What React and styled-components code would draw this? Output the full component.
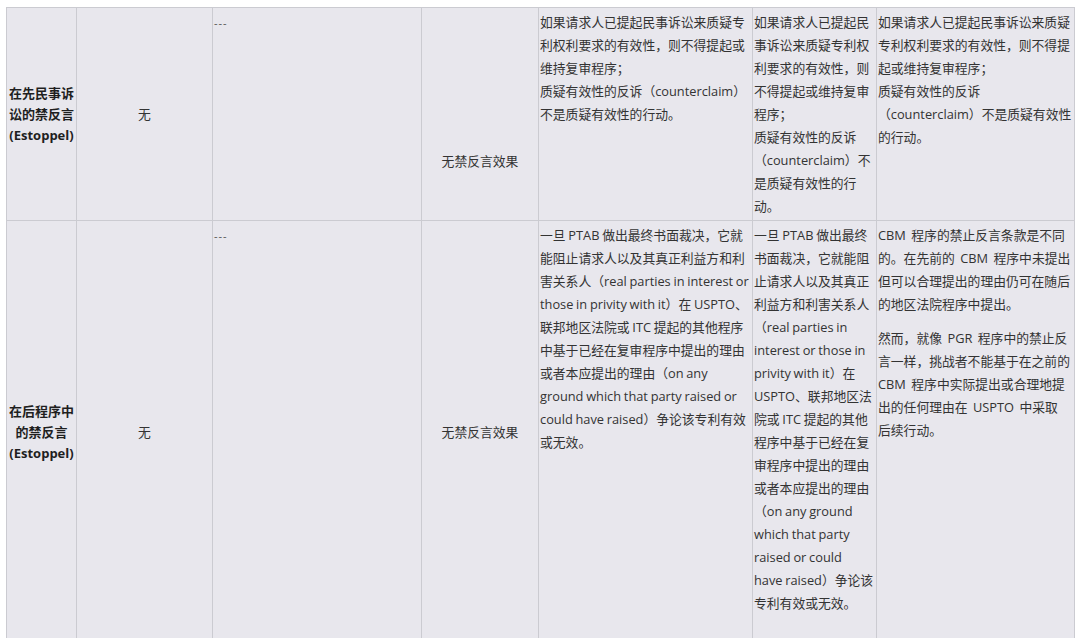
import styled, { createGlobalStyle } from "styled-components";

const GlobalStyle = createGlobalStyle`
  body {
    margin: 0;
    background: #ffffff;
    font-family: "Open Sans", "Noto Sans CJK SC", sans-serif;
  }
`;

const Table = styled.table`
  margin: 7px 0 0 6px;
  border-collapse: collapse;
  table-layout: fixed;
  width: 1068px;
  background: #e8e7ed;
  color: #333333;
  font-size: 12.8px;
`;

const Col = styled.col`
  width: ${(p) => p.$w}px;
`;

const Row = styled.tr`
  height: ${(p) => p.$height}px;
`;

const Cell = styled.td`
  border: 1px solid #cbcbd1;
  padding: 3px 0 0 1px;
  vertical-align: top;
  line-height: 23px;
  white-space: nowrap;
  overflow: hidden;
  word-spacing: -0.6px;
`;

const HeadCell = styled(Cell)`
  vertical-align: middle;
  text-align: center;
  padding: 0;
  font-size: 13px;
  font-weight: 700;
  line-height: 21px;
  color: #1f1f1f;
  word-spacing: 0;
`;

const MidCell = styled(Cell)`
  vertical-align: middle;
  text-align: center;
  padding: ${(p) => p.$offset || 0}px 0 0 0;
`;

const Dash = styled.span`
  font-size: 11px;
  color: #555555;
  letter-spacing: 1px;
`;

const Para = styled.div`
  & + & {
    margin-top: 11px;
  }
`;

const Line = styled.div`
  white-space: pre;
`;

const Lines = ({ lines }) => lines.map((l, i) => <Line key={i}>{l}</Line>);

const widths = [70, 136, 209, 117, 214, 124, 198];

const rows = [
  {
    height: 213,
    head: ["在先民事诉", "讼的禁反言", "(Estoppel)"],
    effectOffset: 94,
    c5: [
      [
        "如果请求人已提起民事诉讼来质疑专",
        "利权利要求的有效性，则不得提起或",
        "维持复审程序；",
        "质疑有效性的反诉（counterclaim）",
        "不是质疑有效性的行动。",
      ],
    ],
    c6: [
      [
        "如果请求人已提起民",
        "事诉讼来质疑专利权",
        "利要求的有效性，则",
        "不得提起或维持复审",
        "程序；",
        "质疑有效性的反诉",
        "（counterclaim）不",
        "是质疑有效性的行",
        "动。",
      ],
    ],
    c7: [
      [
        "如果请求人已提起民事诉讼来质疑",
        "专利权利要求的有效性，则不得提",
        "起或维持复审程序；",
        "质疑有效性的反诉",
        "（counterclaim）不是质疑有效性",
        "的行动。",
      ],
    ],
  },
  {
    height: 424,
    head: ["在后程序中", "的禁反言", "(Estoppel)"],
    effectOffset: 0,
    c5: [
      [
        "一旦 PTAB 做出最终书面裁决，它就",
        "能阻止请求人以及其真正利益方和利",
        "害关系人（real parties in interest or",
        "those in privity with it）在 USPTO、",
        "联邦地区法院或 ITC 提起的其他程序",
        "中基于已经在复审程序中提出的理由",
        "或者本应提出的理由（on any",
        "ground which that party raised or",
        "could have raised）争论该专利有效",
        "或无效。",
      ],
    ],
    c6: [
      [
        "一旦 PTAB 做出最终",
        "书面裁决，它就能阻",
        "止请求人以及其真正",
        "利益方和利害关系人",
        "（real parties in",
        "interest or those in",
        "privity with it）在",
        "USPTO、联邦地区法",
        "院或 ITC 提起的其他",
        "程序中基于已经在复",
        "审程序中提出的理由",
        "或者本应提出的理由",
        "（on any ground",
        "which that party",
        "raised or could",
        "have raised）争论该",
        "专利有效或无效。",
      ],
    ],
    c7: [
      [
        "CBM  程序的禁止反言条款是不同",
        "的。在先前的  CBM  程序中未提出",
        "但可以合理提出的理由仍可在随后",
        "的地区法院程序中提出。",
      ],
      [
        "然而，就像  PGR  程序中的禁止反",
        "言一样，挑战者不能基于在之前的",
        "CBM  程序中实际提出或合理地提",
        "出的任何理由在  USPTO  中采取",
        "后续行动。",
      ],
    ],
  },
];

const TextCell = ({ paras }) => (
  <Cell>
    {paras.map((p, i) => (
      <Para key={i}>
        <Lines lines={p} />
      </Para>
    ))}
  </Cell>
);

export default function App() {
  return (
    <>
      <GlobalStyle />
      <Table>
        <colgroup>
          {widths.map((w, i) => (
            <Col key={i} $w={w} />
          ))}
        </colgroup>
        <tbody>
          {rows.map((r, i) => (
            <Row key={i} $height={r.height}>
              <HeadCell>
                <Lines lines={r.head} />
              </HeadCell>
              <MidCell>无</MidCell>
              <Cell>
                <Dash>---</Dash>
              </Cell>
              <MidCell $offset={r.effectOffset}>无禁反言效果</MidCell>
              <TextCell paras={r.c5} />
              <TextCell paras={r.c6} />
              <TextCell paras={r.c7} />
            </Row>
          ))}
        </tbody>
      </Table>
    </>
  );
}
